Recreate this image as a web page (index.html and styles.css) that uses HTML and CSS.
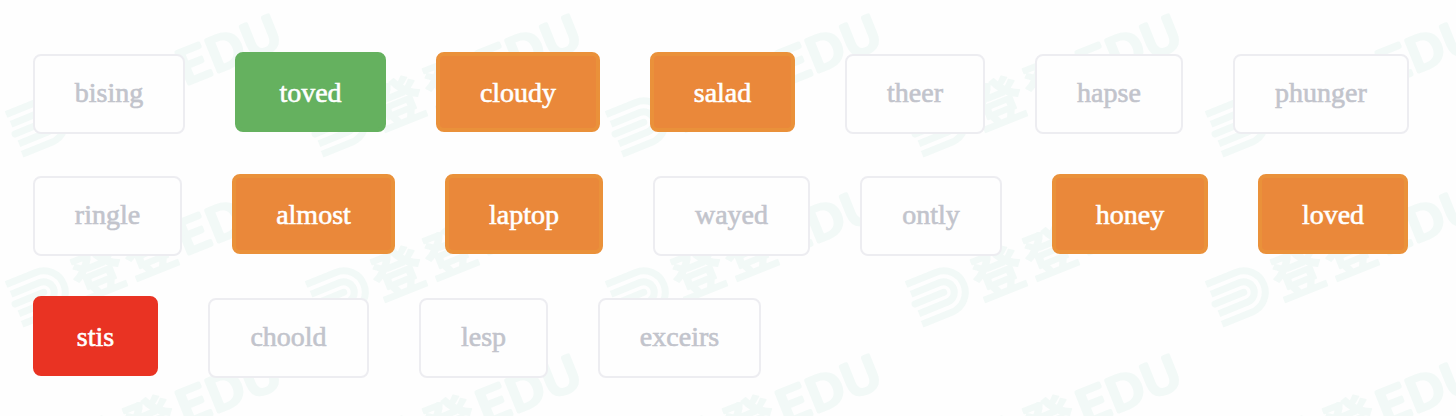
FILE: index.html
```html
<!DOCTYPE html>
<html lang="en">
<head>
<meta charset="utf-8">
<title>Words</title>
<link rel="stylesheet" href="styles.css">
</head>
<body>
<svg class="watermark" width="1456" height="416" aria-hidden="true">
  <defs>
    <g id="mark">
      <g transform="translate(4 282) rotate(-22)">
        <g class="arch">
          <path d="M1 3H33A21.500 21.500 0 0 1 33 46H1"/>
          <path d="M2 14H33A10.500 10.500 0 0 1 33 35H2"/>
          <path d="M2 24.500H33" stroke-linecap="round"/>
        </g>
        <text class="han" x="65" y="46">登</text>
        <text class="han" x="121" y="46">登</text>
        <text class="edu" x="177" y="43" textLength="109" lengthAdjust="spacingAndGlyphs">EDU</text>
      </g>
    </g>
    <g id="row">
      <use href="#mark"/><use href="#mark" x="300"/><use href="#mark" x="600"/><use href="#mark" x="900"/><use href="#mark" x="1200"/>
    </g>
  </defs>
  <use href="#row" y="-170"/><use href="#row"/><use href="#row" y="170"/>
</svg>
<main class="words">
  <div class="line">
    <span class="word" style="width:152px">bising</span>
    <span class="word correct" style="width:151px">toved</span>
    <span class="word missed" style="width:164px">cloudy</span>
    <span class="word missed" style="width:145px">salad</span>
    <span class="word" style="width:140px">theer</span>
    <span class="word" style="width:148px">hapse</span>
    <span class="word" style="width:176px">phunger</span>
  </div>
  <div class="line">
    <span class="word" style="width:149px">ringle</span>
    <span class="word missed" style="width:163px">almost</span>
    <span class="word missed" style="width:158px">laptop</span>
    <span class="word" style="width:157px">wayed</span>
    <span class="word" style="width:142px">ontly</span>
    <span class="word missed" style="width:156px">honey</span>
    <span class="word missed" style="width:150px">loved</span>
  </div>
  <div class="line">
    <span class="word wrong" style="width:125px">stis</span>
    <span class="word" style="width:161px">choold</span>
    <span class="word" style="width:129px">lesp</span>
    <span class="word" style="width:163px">exceirs</span>
  </div>
</main>
</body>
</html>
```
FILE: styles.css
```css
body {
  margin: 0;
  background: #fefefe;
  height: 416px;
  overflow: hidden;
}
.watermark {
  position: absolute;
  top: 0;
  left: 0;
  z-index: -1;
}
.arch {
  fill: none;
  stroke: #f2f9f7;
  stroke-width: 7;
}
.han,
.edu {
  fill: #f2f9f7;
  stroke: #f2f9f7;
  stroke-linejoin: round;
  font-family: "Noto Sans CJK TC", sans-serif;
}
.han {
  font-size: 51px;
  font-weight: 700;
  stroke-width: 1.5;
}
.edu {
  font-size: 46px;
  font-weight: 400;
  stroke-width: 4;
}
.words {
  display: flex;
  flex-direction: column;
  gap: 42px;
  padding: 52px 0 0 33px;
}
.line {
  display: flex;
  align-items: flex-start;
  gap: 50px;
  height: 80px;
}
.word {
  box-sizing: border-box;
  flex: none;
  height: 80px;
  margin-top: 2px;
  border: 2px solid #ededf1;
  border-radius: 8px;
  background: #fefefe;
  color: #c2c4cc;
  font: 28px/74px "Liberation Serif", serif;
  text-align: center;
  -webkit-text-stroke: 0.6px currentColor;
}
.correct,
.missed,
.wrong {
  margin-top: 0;
  border: 4px solid;
  color: #fff;
}
.correct {
  background: #65b15f;
  border-color: #65b15f;
}
.missed {
  background: #ea883a;
  border-color: #ea913a;
}
.wrong {
  background: #e93323;
  border-color: #e93323;
}
.correct,
.wrong,
.missed {
  -webkit-text-stroke-color: #fff;
}
```
